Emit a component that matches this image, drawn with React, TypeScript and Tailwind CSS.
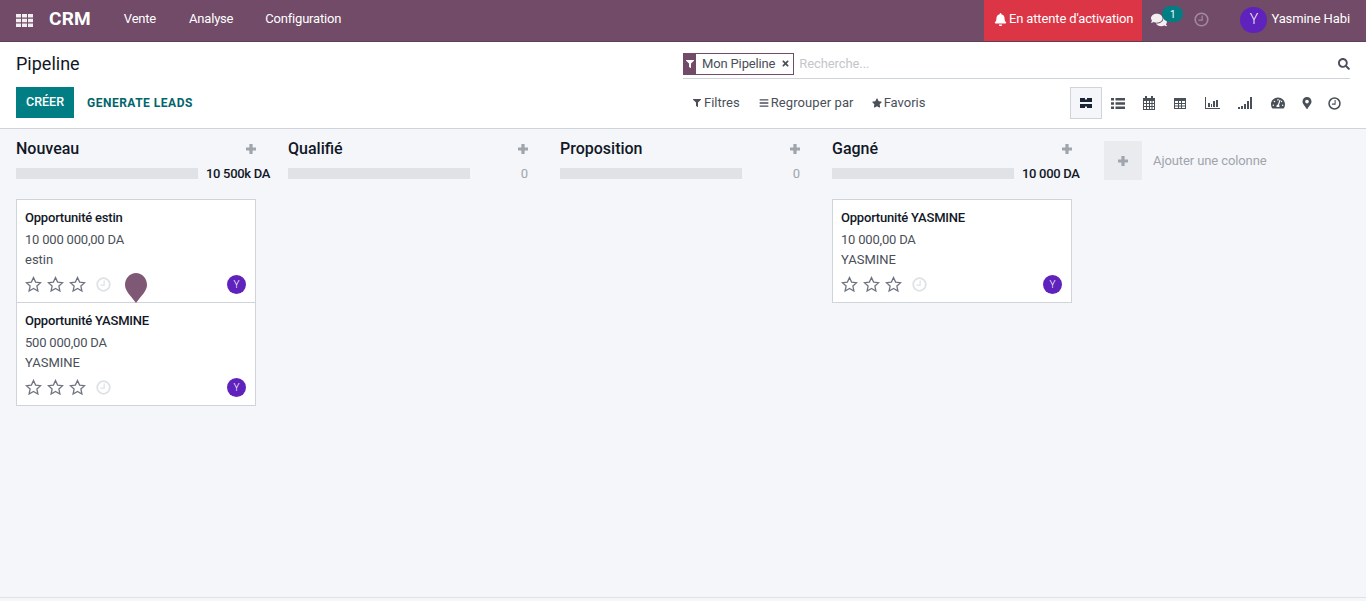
import {
  FaBell,
  FaComments,
  FaFilter,
  FaSearch,
  FaStar,
  FaTachometerAlt,
  FaTimes,
  FaMapMarkerAlt,
  FaBars,
} from "react-icons/fa";

type Lead = { title: string; amount: string; contact: string };

const columns: { name: string; total: string; filled: boolean; leads: Lead[] }[] = [
  {
    name: "Nouveau",
    total: "10 500k DA",
    filled: true,
    leads: [
      { title: "Opportunité estin", amount: "10 000 000,00 DA", contact: "estin" },
      { title: "Opportunité YASMINE", amount: "500 000,00 DA", contact: "YASMINE" },
    ],
  },
  { name: "Qualifié", total: "0", filled: false, leads: [] },
  { name: "Proposition", total: "0", filled: false, leads: [] },
  {
    name: "Gagné",
    total: "10 000 DA",
    filled: true,
    leads: [{ title: "Opportunité YASMINE", amount: "10 000,00 DA", contact: "YASMINE" }],
  },
];

const AppsIcon = () => (
  <svg width="17" height="13" viewBox="0 0 17 13" fill="currentColor">
    <path d="M0 0h5v3.6H0zM6 0h5v3.6H6zM12 0h5v3.6h-5zM0 4.7h5v3.6H0zM6 4.7h5v3.6H6zM12 4.7h5v3.6h-5zM0 9.4h5V13H0zM6 9.4h5V13H6zM12 9.4h5V13h-5z" />
  </svg>
);

const KanbanIcon = () => (
  <svg width="12" height="10" viewBox="0 0 12 10" fill="currentColor">
    <path d="M0 0h5v1l1 1 1-1V0h5v4H0zM0 6h12v4H7V9L6 8 5 9v1H0z" />
  </svg>
);

const TasksIcon = () => (
  <svg width="14" height="11" viewBox="0 0 14 11" fill="currentColor">
    <path d="M0 0h3v2.4H0zM4.500 0H14v2.400H4.500zM0 4.300h3v2.400H0zM4.500 4.300H14v2.400H4.500zM0 8.600h3V11H0zM4.500 8.600H14V11H4.500z" />
  </svg>
);

const CalendarIcon = () => (
  <svg width="12" height="14" viewBox="0 0 12 14" fill="currentColor">
    <path
      fillRule="evenodd"
      d="M2 0h2v2h4V0h2v2h2v12H0V2h2zM1 5v2h2V5zM4 5v2h2V5zM7 5v2h1.500V5zM9.500 5v2H11V5zM1 8v2h2V8zM4 8v2h2V8zM7 8v2h1.500V8zM9.500 8v2H11V8zM1 11v2h2v-2zM4 11v2h2v-2zM7 11v2h1.500v-2zM9.500 11v2H11v-2z"
    />
  </svg>
);

const TableIcon = () => (
  <svg width="12" height="11" viewBox="0 0 12 11" fill="currentColor">
    <path
      fillRule="evenodd"
      d="M0 0h12v11H0zM1 3v2h3V3zM5 3v2h2V3zM8 3v2h3V3zM1 6v1.500h3V6zM5 6v1.500h2V6zM8 6v1.500h3V6zM1 8.500V10h3V8.500zM5 8.500V10h2V8.500zM8 8.500V10h3V8.500z"
    />
  </svg>
);

const GraphIcon = () => (
  <svg width="15" height="12" viewBox="0 0 15 12" fill="currentColor">
    <path d="M0 0h1v11h14v1H0zM3 6h2v4H3zM6 7h1v3H6zM8 4h2v6H8zM11 3h2v7h-2z" />
  </svg>
);

const CohortIcon = () => (
  <svg width="14" height="12" viewBox="0 0 14 12" fill="currentColor">
    <path d="M0 10h2v2H0zM3 9h2v3H3zM6 7h2v5H6zM9 4h2v8H9zM12 0h2v12h-2z" />
  </svg>
);

const PlusIcon = () => (
  <svg width="10" height="10" viewBox="0 0 10 10" fill="#a0a4ac">
    <path d="M3.400 0h3.200v3.400H10v3.200H6.600V10H3.400V6.600H0V3.400h3.400z" />
  </svg>
);

const StarIcon = () => (
  <svg width="17" height="17" viewBox="0 0 17 17" fill="none" stroke="#6f7480" strokeWidth="1.3">
    <path d="M8.500 1.500l2.100 4.600 5 .6-3.700 3.400 1 4.900-4.400-2.500-4.400 2.500 1-4.900L1.400 6.700l5-.6z" />
  </svg>
);

const ClockIcon = ({ size, color, width }: { size: number; color: string; width: number }) => (
  <svg width={size} height={size} viewBox="0 0 15 15" fill="none" stroke={color} strokeWidth={width}>
    <circle cx="7.500" cy="7.500" r="6.300" />
    <path d="M8.200 3.500v4.700H4.500" strokeWidth="1.200" />
  </svg>
);

const LeadCard = ({ lead }: { lead: Lead }) => (
  <div className="-mb-px h-[104px] w-[240px] border border-[#ced4da] bg-white pl-2 pr-[9px] pt-[10px]">
    <div className="text-[13px] font-medium leading-4 tracking-[-0.2px] text-[#111827]">
      {lead.title}
    </div>
    <div className="mt-[6px] text-[13px] leading-4 tracking-[-0.2px] text-[#4a4f59]">{lead.amount}</div>
    <div className="mt-1 text-[13px] leading-4 text-[#4a4f59]">{lead.contact}</div>
    <div className="mt-[7px] flex items-center">
      <StarIcon />
      <span className="ml-[5px]"><StarIcon /></span>
      <span className="ml-[5px]"><StarIcon /></span>
      <span className="ml-[10px]"><ClockIcon size={15} color="#dee2e6" width={1.8} /></span>
      <div className="ml-auto flex h-[19px] w-[19px] items-center justify-center rounded-full bg-[#5f22bd] text-[10px] font-light text-white">
        Y
      </div>
    </div>
  </div>
);

const Column = ({ column }: { column: (typeof columns)[number] }) => (
  <div className="w-[272px] shrink-0">
    <div className="flex h-[22px] w-[240px] items-center justify-between">
      <span className="text-base font-medium text-[#111827]">{column.name}</span>
      <PlusIcon />
    </div>
    <div className="mt-[8px] flex h-[11px] w-[254px] items-center">
      <div className="h-[11px] w-[182px] shrink-0 bg-[#e0e2e6]" />
      <span
        className={
          column.filled
            ? "ml-2 whitespace-nowrap text-[13px] font-medium tracking-[-0.3px] text-[#111827]"
            : "ml-auto pr-[14px] text-[13px] text-[#a0a4ac]"
        }
      >
        {column.total}
      </span>
    </div>
    <div className="mt-5 flex flex-col">
      {column.leads.map((lead) => (
        <LeadCard key={lead.title + lead.amount} lead={lead} />
      ))}
    </div>
  </div>
);

export default function App() {
  return (
    <div
      className="flex h-[601px] w-[1366px] flex-col overflow-hidden bg-[#f5f6fa] text-[#4a4f59]"
      style={{ fontFamily: "Roboto, sans-serif" }}
    >
      {/* top navbar */}
      <nav className="flex h-[42px] shrink-0 items-center border-b border-[#5c3f55] bg-[#714b67] text-white">
        <span className="ml-4 text-[#f3eef2]"><AppsIcon /></span>
        <span className="mb-[3px] ml-4 text-[19px] font-bold tracking-[0.2px]">CRM</span>
        <span className="mb-[3px] ml-[33px] text-[13px] tracking-[-0.2px]">Vente</span>
        <span className="mb-[3px] ml-[33px] text-[13px] tracking-[-0.2px]">Analyse</span>
        <span className="mb-[3px] ml-[32px] text-[13px] tracking-[-0.2px]">Configuration</span>
        <div className="ml-auto flex h-full items-center bg-[#dc3545] pb-[3px] pl-[10px] pr-[9px] text-[13px] tracking-[-0.14px]">
          <FaBell className="mr-[2px] text-[13px]" />
          En attente d'activation
        </div>
        <div className="relative ml-[9px] flex h-full w-[35px] items-center pb-[2px]">
          <FaComments className="text-[16px] text-[#f3eef2]" />
          <span className="absolute left-[11px] top-[6px] flex h-[16px] w-[21px] items-center justify-center rounded-full bg-[#017e84] text-[10px]">
            1
          </span>
        </div>
        <span className="mb-[3px] ml-[8px]"><ClockIcon size={15} color="#a48a9e" width={1.6} /></span>
        <div className="mb-[2px] ml-[31px] flex h-[26px] w-[27px] items-center justify-center rounded-full bg-[#5f22bd] text-[14px] font-light">
          Y
        </div>
        <span className="mb-[3px] ml-1 mr-4 text-[13px] tracking-[-0.1px]">Yasmine Habi</span>
      </nav>

      {/* control panel */}
      <header className="flex h-[87px] shrink-0 border-b border-[#ced4da] bg-white">
        <div className="flex w-[683px] flex-col pl-4">
          <h1 className="mt-[9px] text-lg leading-[26px] text-[#111827]">Pipeline</h1>
          <div className="mt-[10px] flex items-center">
            <button className="h-[31px] w-[58px] bg-[#017e84] text-[12.5px] font-medium text-white">
              CRÉER
            </button>
            <button className="ml-[13px] text-xs font-bold tracking-[0.5px] text-[#01666b]">
              GENERATE LEADS
            </button>
          </div>
        </div>
        <div className="flex flex-1 flex-col pr-4">
          <div className="mt-[11px] flex h-[26px] items-center border-b border-[#ced4da] pb-[4px]">
            <div className="flex h-[22px] items-center border border-[#714b67]">
              <span className="flex h-full w-[12px] items-center justify-center bg-[#714b67] text-white">
                <FaFilter className="text-[8px]" />
              </span>
              <span className="ml-[6px] text-[13px] tracking-[-0.15px] text-[#4a4f59]">Mon Pipeline</span>
              <FaTimes className="ml-[6px] mr-[3px] text-[9px] text-[#4a4f59]" />
            </div>
            <span className="ml-[5px] text-[13px] tracking-[-0.1px] text-[#c4c6ca]">Recherche...</span>
            <FaSearch className="ml-auto text-[12px] text-[#4a4f59]" />
          </div>
          <div className="mt-[8px] flex h-[32px] items-center">
            <FaFilter className="ml-[10px] mr-[3px] text-[8px]" />
            <span className="text-[13px]">Filtres</span>
            <FaBars className="ml-[19px] mr-[2px] text-[10px]" />
            <span className="text-[13px] tracking-[0.1px]">Regrouper par</span>
            <FaStar className="ml-[18px] mr-[2px] text-[10px]" />
            <span className="text-[13px]">Favoris</span>
            <div className="ml-auto flex items-center text-[#495057]">
              <div className="flex h-[32px] w-[32px] items-center justify-center border border-[#ced4da] bg-[#f5f6fa] text-[#1b2435]">
                <KanbanIcon />
              </div>
              <div className="flex w-[31px] justify-center"><TasksIcon /></div>
              <div className="flex w-[32px] justify-center"><CalendarIcon /></div>
              <div className="flex w-[30px] justify-center"><TableIcon /></div>
              <div className="flex w-[34px] justify-center"><GraphIcon /></div>
              <div className="flex w-[32px] justify-center"><CohortIcon /></div>
              <div className="flex w-[33px] justify-center"><FaTachometerAlt className="text-[14px]" /></div>
              <div className="flex w-[25px] justify-center"><FaMapMarkerAlt className="text-[12px]" /></div>
              <div className="flex w-[31px] justify-center"><ClockIcon size={13} color="#495057" width={1.8} /></div>
            </div>
          </div>
        </div>
      </header>

      {/* kanban */}
      <main className="relative mb-[3px] flex flex-1 border-b border-[#dee2e6] pl-4 pt-[9px]">
        {columns.map((column) => (
          <Column key={column.name} column={column} />
        ))}
        <div className="mt-[3px] flex h-[39px] items-center">
          <div className="flex h-[39px] w-[38px] items-center justify-center bg-[#e9ebef]">
            <PlusIcon />
          </div>
          <span className="ml-[11px] text-[13px] tracking-[-0.1px] text-[#a0a4ac]">Ajouter une colonne</span>
        </div>
        {/* drag marker over the first card */}
        <svg
          className="absolute left-[125px] top-[144px]"
          width="22"
          height="30"
          viewBox="0 0 22 30"
        >
          <path
            d="M11 0C17 0 22 5 22 12C22 18 16 23 11 30C6 23 0 18 0 12C0 5 5 0 11 0Z"
            fill="#7f5876"
          />
        </svg>
      </main>
    </div>
  );
}
